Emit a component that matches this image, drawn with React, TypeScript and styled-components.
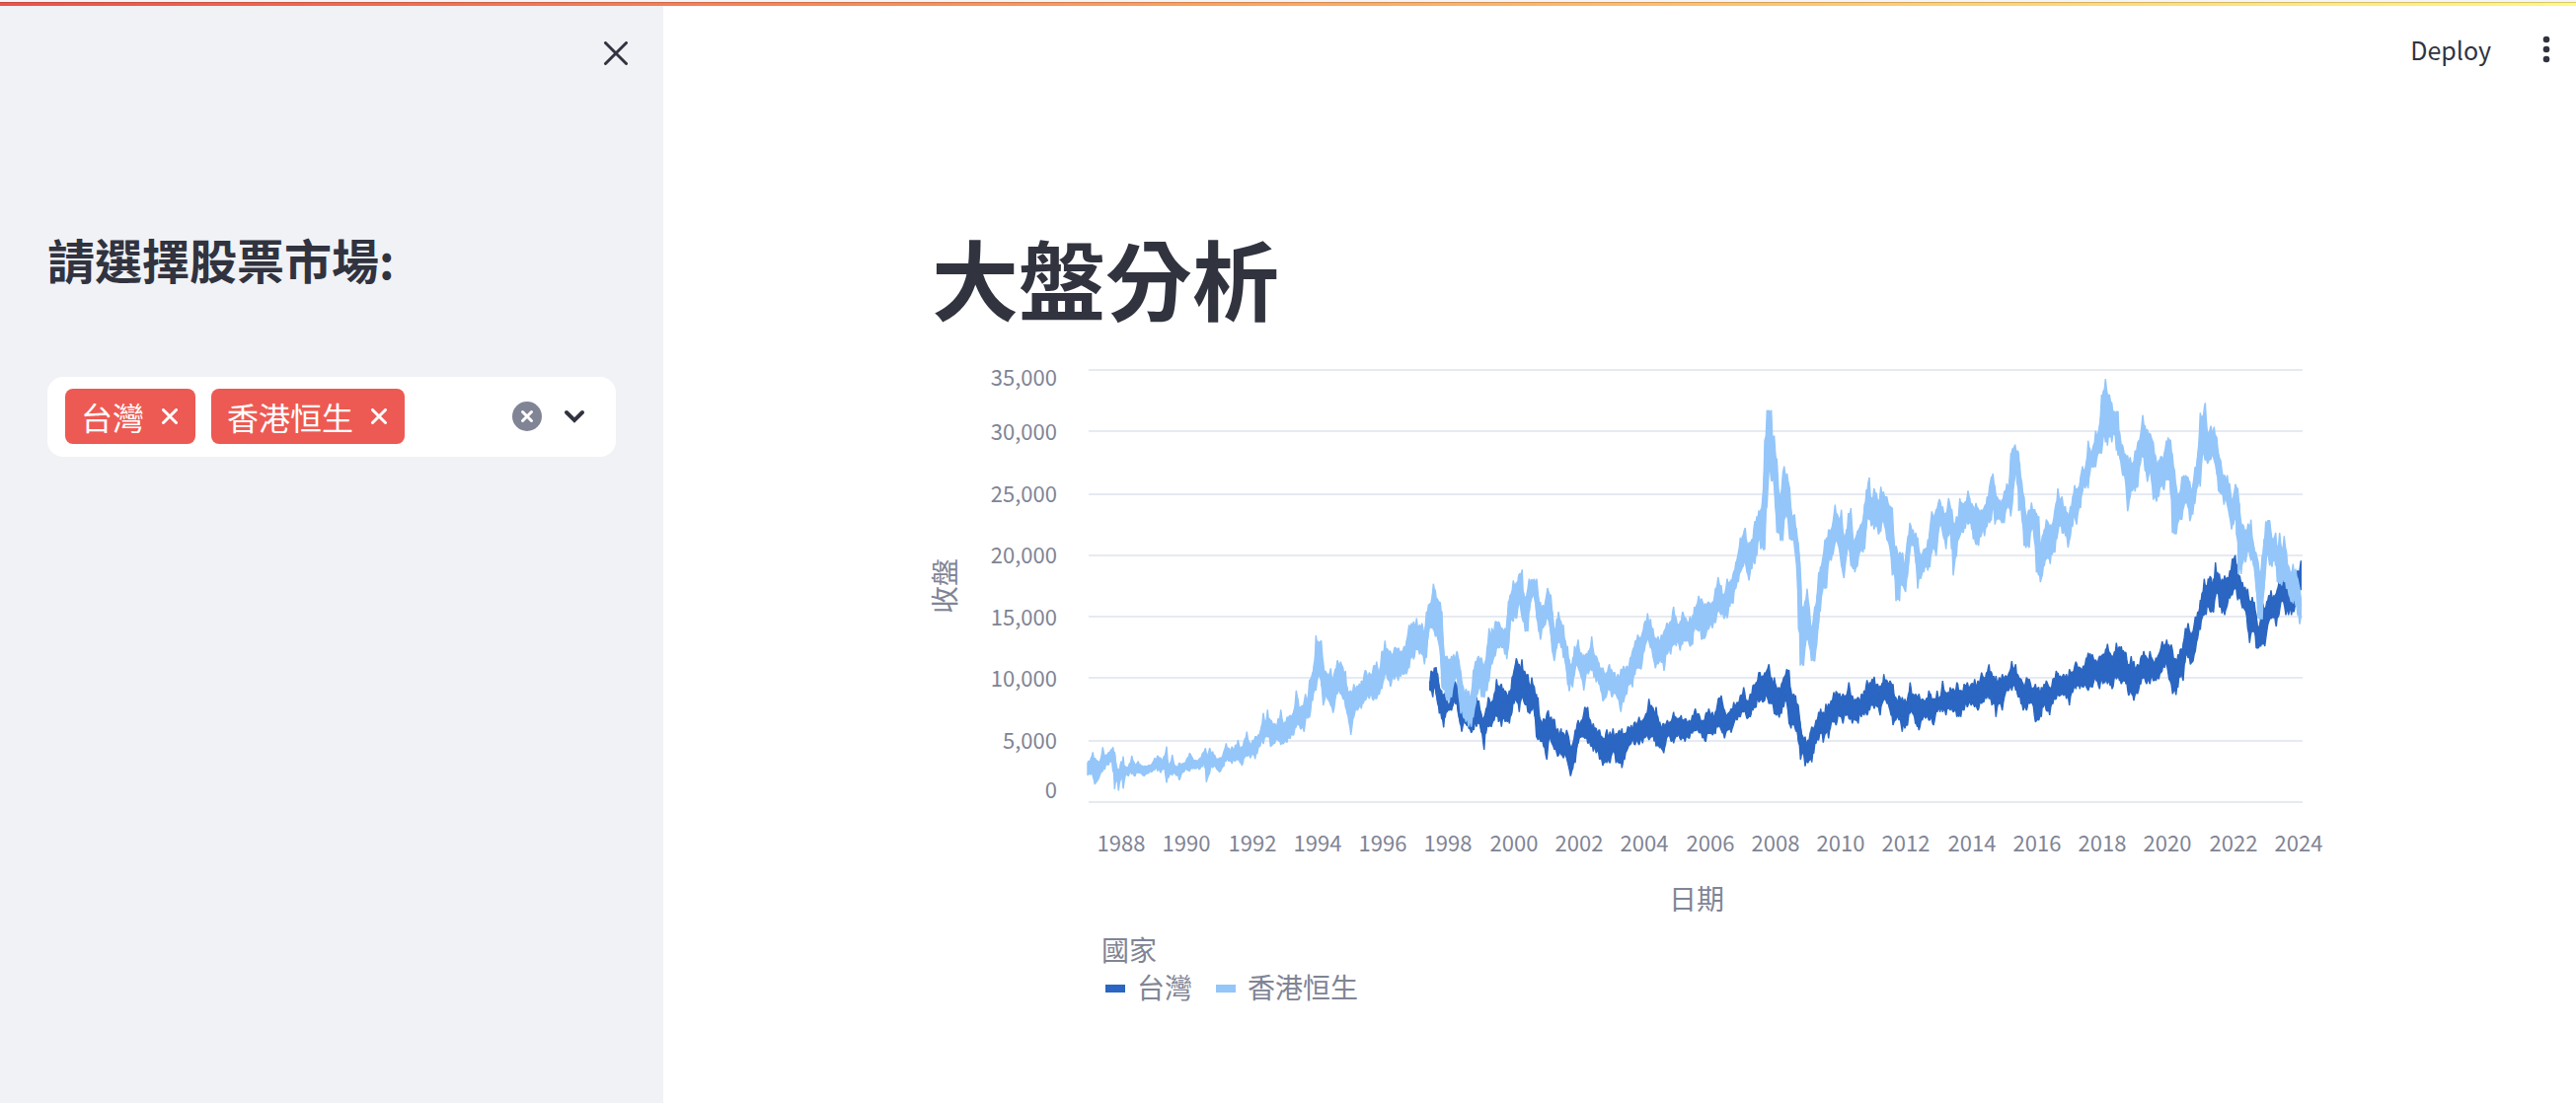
import React, { useState } from "react";
import styled, { createGlobalStyle } from "styled-components";

const ink = "#31333f";
const muted = "#808495";
const coral = "#ed5a53";
const darkBlue = "#2a66c2";
const lightBlue = "#94c6fa";
const fonts = `"Noto Sans CJK TC", "Noto Sans", sans-serif`;

const GlobalStyle = createGlobalStyle`
  *, *::before, *::after { box-sizing: border-box; }
  body { margin: 0; background: #ffffff; color: ${ink}; font-family: ${fonts}; }
  button, input { font: inherit; color: inherit; }
`;

const Decoration = styled.div`
  height: 6px;
  border-top: 2px solid #f4f5f8;
  background: linear-gradient(90deg, #ea534c, #f9a765 50%, #fdf986);
  background-clip: padding-box;
  box-shadow: inset 0 3px 0 -2px rgba(90, 30, 0, 0.22);
`;

const Shell = styled.div`
  display: flex;
  min-height: calc(100vh - 6px);
`;

const Sidebar = styled.aside`
  flex: 0 0 672px;
  min-width: 0;
  background: #f0f2f6;
`;

const SidebarTop = styled.div`
  display: flex;
  justify-content: flex-end;
  padding: 24px 24px 0;
`;

const IconButton = styled.button<{ $size: number }>`
  display: inline-flex;
  flex: none;
  align-items: center;
  justify-content: center;
  width: ${(p) => p.$size}px;
  height: ${(p) => p.$size}px;
  padding: 0;
  border: 0;
  background: transparent;
  cursor: pointer;
`;

const SidebarBody = styled.div`
  padding: 155px 48px 0;
`;

const SidebarHeading = styled.h2`
  margin: 0 0 91px;
  font-size: 48px;
  line-height: 58px;
  font-weight: 700;
`;

const MultiSelect = styled.div`
  display: flex;
  align-items: center;
  gap: 16px;
  padding: 12px 26px 13px 18px;
  border-radius: 16px;
  background: #ffffff;
`;

const Tag = styled.span`
  display: inline-flex;
  flex: none;
  align-items: center;
  gap: 12px;
  height: 56px;
  padding: 0 12px 0 16px;
  border-radius: 8px;
  background: ${coral};
  color: #ffffff;
  font-size: 32px;
  line-height: 56px;
`;

const SearchInput = styled.input`
  flex: 1;
  width: 0;
  min-width: 0;
  border: 0;
  outline: 0;
  background: transparent;
  font-size: 32px;
  height: 40px;
`;

const SelectActions = styled.div`
  display: flex;
  align-items: center;
  gap: 16px;
`;

const Main = styled.main`
  flex: 1;
  min-width: 0;
  padding-left: 14px;
`;

const Toolbar = styled.header`
  display: flex;
  align-items: center;
  justify-content: flex-end;
  gap: 38px;
  height: 88px;
  padding-right: 12px;
`;

const DeployButton = styled.button`
  padding: 0;
  border: 0;
  background: transparent;
  font-size: 25px;
  line-height: 40px;
  cursor: pointer;
`;

const Content = styled.div`
  max-width: 1408px;
  margin: 0 auto;
  padding-top: 133px;
`;

const Title = styled.h1`
  margin: 0;
  font-size: 88px;
  line-height: 106px;
  font-weight: 700;
`;

const Figure = styled.figure`
  margin: 21px 0 0;
`;

const Plot = styled.svg`
  display: block;
  overflow: visible;
  width: 100%;
  height: auto;
  font-family: ${fonts};
  fill: ${muted};
`;

const Legend = styled.figcaption`
  padding: 7px 0 0 172px;
  color: ${muted};
  font-size: 28px;
  line-height: 38px;
`;

const LegendItems = styled.ul`
  display: flex;
  gap: 24px;
  margin: 0;
  padding: 0 0 0 4px;
  list-style: none;
`;

const LegendItem = styled.li<{ $color: string }>`
  display: flex;
  align-items: center;
  gap: 12px;

  &::before {
    content: "";
    width: 20px;
    height: 8px;
    margin-top: 4px;
    background: ${(p) => p.$color};
  }
`;

/* Each chunk lists "x:high,low" bands in thirds of a pixel from its origin in the plot. */
type Chunk = { x: number; y: number; bands: string };

const hangSeng: Chunk[] = [
  {
    x: -3,
    y: 226,
    bands: `6:520,558 22:487,560 28:505,585 38:515,570 42:520,560 52:472,545 58:500,540 70:487,525 83:472,515 88:485,600 94:530,575 100:540,604 108:515,565 114:500,598 120:530,560 130:530,560 140:498,555 150:525,560 160:515,550 178:530,560 200:525,548 210:505,540 218:498,545 228:505,550 238:500,535 246:470,580 252:530,565 263:495,558 270:530,552 284:520,572 300:520,545 316:490,545 330:512,538 345:508,540 364:475,530 367:490,578 377:475,550 386:485,535 400:508,540 407:505,548 420:485,530 427:460,515 435:475,515 445:470,522 455:465,515 463:450,512 475:470,528 490:425,500 500:462,505 508:450,495 515:440,508 530:430,470 540:368,462 547:395,440 553:358,440 562:390,470 575:400,460 585:385,450 593:358,465 600:400,462 612:380,458 622:375,445 632:365,435 640:300,412 646:330,405 654:350,418 664:335,425 668:310,390 675:330,385 680:270,382 690:245,330 695:220,300 700:132,300 706:150,258 716:148,270 722:225,345 735:250,325 745:232,345 752:262,368 765:208,310 775:212,310 782:230,325 790:240,350 795:290,370 806:300,435 815:280,380 825:285,360 838:270,355 850:238,330 862:245,325 875:225,330 884:212,325 893:240,310 900:180,295 910:148,250 918:175,265 926:180,288 940:168,262 950:170,270 958:180,258 968:165,250 975:150,250 983:100,232 990:95,200 997:90,205 1006:80,175 1015:100,190 1022:95,190 1030:130,220 1036:60,200 1042:40,125`,
  },
  {
    x: 297,
    y: 166,
    bands: `147:215,290 152:200,290 157:155,295 163:175,315 168:200,312 178:212,360 183:240,470 188:370,478 198:375,510 205:385,515 212:375,500 218:370,460 229:360,440 235:390,500 240:420,550 248:470,560 256:475,575 264:480,590 272:490,590 278:420,560 285:390,520 294:375,475 303:380,500 312:400,500 320:350,480 326:290,450 335:290,400 345:270,375 355:270,350 365:290,350 374:290,370 380:290,385 385:210,350 390:190,270 400:145,270 410:150,260 418:125,210 427:112,260 430:190,270 436:195,300 444:170,300 448:140,230 455:142,200 463:140,190 471:140,260 477:205,300 482:210,325 490:220,290 497:210,280 504:168,260 514:190,300 518:240,360 524:290,390 532:260,350 537:240,335 545:270,350 552:280,380 558:330,390 565:345,460 570:385,482 580:400,470 586:345,420 597:325,410 605:365,435 614:370,480 620:370,435 628:360,430 638:315,420 645:370,440 652:375,455 660:395,460 672:410,512 682:425,500 692:400,480 700:420,500 708:425,490 718:430,505 727:415,545 735:405,515 745:405,490 755:380,460 762:360,470 770:330,430 778:310,410 788:320,415 798:275,360 808:245,320 817:262,350 824:290,375 832:320,412 840:315,400 850:310,395 858:300,420 866:275,370 878:270,370 887:225,340 895:260,345 907:270,358 914:240,340 925:262,330 937:255,345 945:250,340 950:225,290 963:192,300 972:200,325 982:215,320 992:210,295 1005:210,290 1014:170,275 1022:135,240 1032:160,250 1040:190,262 1050:140,260 1058:150,225 1068:125,215 1076:90,170 1084:60,150`,
  },
  {
    x: 597,
    y: 6,
    bands: `190:495,600 205:465,570 210:510,600 216:510,625 225:500,590 234:445,575 240:430,550 246:412,500 252:410,530 260:360,532 264:200,530 268:185,410 271:107,400 277:107,290 284:107,322 287:185,322 293:185,320 296:235,400 301:255,480 306:350,482 312:370,505 319:300,505 323:278,440 332:300,430 340:345,500 345:420,502 355:425,510 360:485,560 366:510,640 370:560,750 372:660,884 382:715,884 386:690,835 393:650,800 400:710,825 406:770,870 416:705,870 422:690,820 428:600,750 433:585,720 440:560,655 447:500,650 452:495,648 458:470,565 466:470,565 472:445,545 478:395,510 487:430,515 497:410,580 505:490,618 512:480,550 518:420,520 526:405,580 533:510,590 538:500,600 546:475,580 556:455,535 563:440,540 568:395,530 573:350,445 582:312,440 588:380,460 596:345,470 603:360,455 610:385,485 617:340,475 625:355,440 635:370,500 645:400,530 652:405,610 658:520,600 663:520,688 674:540,688 676:540,640 683:540,640 692:570,660 698:500,600 705:450,530 715:470,520 723:480,550 729:495,650 738:545,620 748:530,600 760:500,595 766:470,585 772:415,540 780:430,530 785:410,550 795:378,460 805:400,480 815:420,530 823:375,490 833:410,500 837:450,610 847:430,550 853:430,500 857:375,490 868:390,480 882:352,455 893:390,470 898:400,500 906:390,515 914:410,520 922:410,490 932:400,490 940:370,460 947:340,450 953:310,440 958:300,400`,
  },
  {
    x: 897,
    y: -14,
    bands: `64:400,515 70:430,500 78:440,500 85:440,510 92:415,510 100:390,465 106:400,465 112:300,490 117:285,450 125:272,370 134:292,370 136:300,473 146:390,473 152:430,580 158:485,586 168:470,586 175:448,530 185:470,560 190:480,660 197:490,670 202:590,690 208:550,670 214:530,640 220:500,620 226:510,620 232:515,635 240:510,600 246:470,600 255:405,540 262:440,520 268:430,540 278:460,550 286:485,585 293:460,550 300:430,520 306:395,490 312:405,515 318:400,470 324:370,465 330:338,410 338:350,405 347:260,405 355:295,340 363:275,340 370:230,340 380:228,298 388:120,298 393:110,250 400:72,265 406:120,275 412:120,250 419:145,265 426:170,240 433:170,290 438:170,305 443:255,310 452:275,365 460:300,370 467:305,475 475:310,430 483:330,410 490:290,415 498:265,400 506:245,330 513:182,310 520:215,350 527:225,385 536:240,350 545:265,440 555:325,445 562:320,430 568:308,400 578:300,410 585:260,380 590:250,380 598:260,385 603:300,540 610:350,544 615:400,544 622:420,505 632:370,500 638:365,460 644:365,450 650:370,460 656:385,505 665:400,485 672:340,450 680:305,400 688:175,400 695:185,295 703:145,320 710:245,330 720:215,318 730:218,318 738:250,360 743:300,412 750:320,420 760:365,455 770:365,455 777:390,490 783:440,530 795:392,500 802:405,500 803:420,666 812:510,666 818:515,630 826:530,630 833:512,590 842:500,625 850:580,640 857:600,680 864:630,800 870:660,804 876:610,804 882:570,710 887:505,620 893:503,600 899:503,640 906:560,644 917:540,620 922:590,690 929:540,695 935:590,700 943:550,690 950:600,710 958:645,730 964:660,750 970:635,755 978:650,760 984:680,790 990:710,818 994:740,795`,
  },
];

const taiwan: Chunk[] = [
  {
    x: 297,
    y: 166,
    bands: `146:460,478 150:420,480 155:425,500 160:410,470 165:408,490 170:430,520 175:470,550 182:480,565 188:490,592 193:485,560 198:510,545 205:530,540 212:500,540 218:448,515 224:455,520 232:460,540 238:520,580 243:540,605 250:540,575 258:565,585 265:570,595 272:560,608 280:540,600 288:500,590 295:510,580 302:550,605 311:560,660 317:535,600 324:500,590 333:515,590 342:490,570 349:445,560 355:465,575 364:460,590 375:480,575 388:480,580 396:440,545 402:420,520 409:382,510 418:400,545 426:385,500 434:420,520 444:430,545 450:465,550 456:440,540 464:470,540 470:490,620 475:500,630 483:570,635 492:565,650 502:550,690 506:540,640 515:560,635 525:568,660 535:595,680 545:595,675 553:610,685 562:600,685 568:620,710 574:650,740 581:640,715 588:600,700 597:570,640 607:570,620 617:530,625 626:530,640 634:570,645 643:580,665 652:595,670 662:600,690 672:625,708 684:598,700 694:605,700 703:595,665 712:610,700 722:600,700 730:595,715 738:610,690 748:590,655 758:585,640 770:575,645 782:560,645 793:570,640 803:550,620 812:505,630 822:530,620 834:530,650 845:575,655 857:580,670 868:570,620 880:575,635 887:545,640 898:565,620 910:555,630 922:565,635 935:570,625 944:555,610 953:535,600 963:550,605 975:570,625 985:550,635 994:535,610 1005:545,615 1014:545,612 1023:505,590 1032:495,600 1042:540,625 1052:550,600 1062:535,608 1070:515,580 1080:515,570 1090:495,560 1100:470,545 1110:510,565 1120:490,560 1128:465,540 1138:455,530 1146:425,515`,
  },
  {
    x: 597,
    y: 6,
    bands: `250:905,990 258:915,995 264:905,990 270:900,975 277:880,1000 285:920,1000 293:920,1030 300:950,1035 308:950,1042 315:940,1030 322:920,1010 331:895,995 338:898,1060 344:960,1075 352:970,1060 358:975,1080 366:1005,1110 373:1070,1170 380:1100,1150 387:1100,1190 395:1110,1180 402:1090,1170 407:1070,1178 413:1075,1150 420:1050,1120 428:1025,1110 434:1015,1090 442:1025,1118 450:1000,1090 458:1000,1105 466:990,1060 474:965,1055 481:962,1065 492:968,1040 502:970,1060 510:975,1035 520:935,1045 530:975,1060 540:985,1050 548:980,1060 558:970,1040 566:960,1035 575:928,1035 583:935,1020 590:925,1005 597:918,1015 607:940,1010 615:945,1035 626:910,985 636:930,1000 645:930,1020 654:940,1065 662:980,1050 672:975,1050 682:980,1085 690:985,1075 698:985,1065 706:935,1030 714:970,1030 722:970,1060 733:970,1080 743:985,1050 753:990,1045 763:960,1050 777:985,1065 788:960,1025 797:980,1025 805:930,1025 815:965,1035 828:950,1020 838:955,1025 848:935,1040 860:960,1040 870:940,1020 880:935,1010 892:940,1005 902:925,1010 912:930,1020 923:905,1000 930:920,995 938:905,985 946:880,985 955:910,1005`,
  },
  {
    x: 897,
    y: -14,
    bands: `60:975,1060 67:975,1100 77:980,1060 86:970,1080 95:975,1030 105:970,1020 115:930,1020 127:940,1020 135:975,1040 143:985,1060 150:1000,1080 160:980,1080 168:985,1060 178:1015,1060 187:1000,1115 197:1010,1110 205:1010,1100 213:1000,1060 220:990,1080 230:1010,1095 240:985,1060 250:960,1045 262:975,1035 272:970,1035 281:970,1045 290:955,1065 300:965,1025 310:932,1015 322:950,1015 332:945,1010 347:905,1020 360:910,1010 372:930,990 382:915,1015 392:910,1000 406:878,1000 420:915,1015 433:875,985 448:885,1000 462:905,1000 470:940,1035 478:915,1025 486:930,1050 497:940,1030 507:920,1000 516:900,980 525:920,1000 535:900,1000 545:930,990 553:920,990 562:910,985 572:870,960 580:880,950 586:865,940 593:880,985 600:880,1000 604:900,1030 614:925,1033 620:910,1010 627:895,980 636:880,990 643:830,915 651:815,920 658:845,940 666:840,930 673:795,900 680:780,860 688:745,835 693:725,800 700:680,790 706:700,790 712:680,765 718:672,780 728:690,782 734:630,730 740:660,725 746:665,765 754:680,785 762:670,790 770:675,760 778:655,740 785:620,730 794:608,710 802:650,745 808:670,740 816:690,770 824:705,775 832:710,830 838:750,875 846:735,840 852:750,840 858:790,890 865:830,890 872:800,885 878:755,880 884:770,885 890:750,840 896:730,810 903:715,800 911:730,800 919:725,825 927:690,790 933:690,750 941:675,750 948:685,790 956:715,790 965:700,790 973:740,780 980:660,740 985:655,710 990:655,712 994:625,714`,
  },
];

type Band = [number, number, number];

const readBands = (chunks: Chunk[]): Band[] =>
  chunks.flatMap((c) =>
    c.bands.split(" ").map((entry): Band => {
      const [x, range] = entry.split(":");
      const [high, low] = range.split(",").map(Number);
      return [c.x + Number(x) / 3, c.y + high / 3, c.y + low / 3];
    })
  );

/* Fills in the day-to-day jitter between the bands, with a repeatable generator. */
function buildSeries(chunks: Chunk[], seed: number) {
  let state = seed;
  const rand = () => {
    state = (state * 16807) % 2147483647;
    return state / 2147483647;
  };
  const bands = readBands(chunks);
  const upper: string[] = [];
  const lower: string[] = [];
  const put = (x: number, high: number, low: number) => {
    upper.push(`${x.toFixed(1)} ${high.toFixed(1)}`);
    lower.push(`${x.toFixed(1)} ${low.toFixed(1)}`);
  };
  bands.forEach((band, i) => {
    put(...band);
    const next = bands[i + 1];
    if (!next) return;
    const steps = Math.max(1, Math.round(next[0] - band[0]));
    for (let s = 1; s < steps; s++) {
      const t = s / steps;
      const x = band[0] + (next[0] - band[0]) * t;
      const high = band[1] + (next[1] - band[1]) * t;
      const low = band[2] + (next[2] - band[2]) * t;
      const room = Math.min(7, (low - high) * 0.25);
      put(x, high + rand() * room, low - rand() * room);
    }
  });
  return {
    band: `M${upper.join("L")}L${lower.reverse().join("L")}Z`,
    middle: `M${bands
      .slice(1, -1)
      .map(([x, high, low]) => `${x.toFixed(1)} ${((high + low) / 2).toFixed(1)}`)
      .join("L")}`,
  };
}

const taiwanSeries = buildSeries(taiwan, 71);
const hangSengSeries = buildSeries(hangSeng, 29);

function Series({ data, color }: { data: { band: string; middle: string }; color: string }) {
  return (
    <g stroke={color}>
      <path d={data.band} fill={color} strokeWidth="1.4" strokeLinejoin="bevel" />
      <path d={data.middle} fill="none" strokeWidth="5" strokeLinejoin="bevel" />
    </g>
  );
}

const gridLines = [1, 63, 127, 189, 251, 313, 377, 439];
const yTicks = [
  { label: "35,000", y: 37 },
  { label: "30,000", y: 92 },
  { label: "25,000", y: 155 },
  { label: "20,000", y: 217 },
  { label: "15,000", y: 280 },
  { label: "10,000", y: 342 },
  { label: "5,000", y: 405 },
  { label: "0", y: 455 },
];
const years = Array.from({ length: 19 }, (_, i) => 1988 + i * 2);

function PriceChart() {
  return (
    <Figure>
      <Plot viewBox="0 0 1408 582" role="img" aria-label="收盤">
        <g transform="translate(159 20)">
          {gridLines.map((y) => (
            <path key={y} d={`M0 ${y}H1230`} stroke="#e6eaf1" strokeWidth="2" />
          ))}
          <Series data={taiwanSeries} color={darkBlue} />
          <Series data={hangSengSeries} color={lightBlue} />
        </g>
        <g fontSize="22" textAnchor="end">
          {yTicks.map((t) => (
            <text key={t.label} x="127" y={t.y}>
              {t.label}
            </text>
          ))}
        </g>
        <g fontSize="22" textAnchor="middle">
          {years.map((year, i) => (
            <text key={year} x={Math.round(192 + (i * 1193) / 18)} y="509">
              {year}
            </text>
          ))}
        </g>
        <g fontSize="28" textAnchor="middle">
          <text x="775" y="568">
            日期
          </text>
          <text transform="translate(24 240) rotate(-90)">收盤</text>
        </g>
      </Plot>
      <Legend>
        國家
        <LegendItems>
          <LegendItem $color={darkBlue}>台灣</LegendItem>
          <LegendItem $color={lightBlue}>香港恒生</LegendItem>
        </LegendItems>
      </Legend>
    </Figure>
  );
}

function Cross({ size, stroke, color }: { size: number; stroke: number; color: string }) {
  const a = stroke / 2;
  const b = size - a;
  return (
    <svg width={size} height={size} aria-hidden="true">
      <path
        d={`M${a} ${a}L${b} ${b}M${b} ${a}L${a} ${b}`}
        fill="none"
        stroke={color}
        strokeWidth={stroke}
        strokeLinecap="round"
      />
    </svg>
  );
}

export default function App() {
  const [markets, setMarkets] = useState(["台灣", "香港恒生"]);
  const remove = (name: string) => setMarkets(markets.filter((m) => m !== name));

  return (
    <>
      <GlobalStyle />
      <Decoration />
      <Shell>
        <Sidebar>
          <SidebarTop>
            <IconButton type="button" $size={48} aria-label="Close sidebar">
              <Cross size={24} stroke={3} color={ink} />
            </IconButton>
          </SidebarTop>
          <SidebarBody>
            <SidebarHeading>
              <label htmlFor="markets">請選擇股票市場:</label>
            </SidebarHeading>
            <MultiSelect>
              {markets.map((name) => (
                <Tag key={name}>
                  {name}
                  <IconButton
                    type="button"
                    $size={28}
                    aria-label={`Remove ${name}`}
                    onClick={() => remove(name)}
                  >
                    <Cross size={16} stroke={3} color="#ffffff" />
                  </IconButton>
                </Tag>
              ))}
              <SearchInput id="markets" type="text" autoComplete="off" />
              <SelectActions>
                <IconButton
                  type="button"
                  $size={32}
                  aria-label="Clear all"
                  onClick={() => setMarkets([])}
                >
                  <svg width="30" height="30" aria-hidden="true">
                    <circle cx="15" cy="15" r="15" fill={muted} />
                    <path
                      d="M10.5 10.5L19.5 19.5M19.5 10.5L10.5 19.5"
                      stroke="#ffffff"
                      strokeWidth="3"
                      strokeLinecap="round"
                    />
                  </svg>
                </IconButton>
                <IconButton type="button" $size={32} aria-label="Open list">
                  <svg width="22" height="14" aria-hidden="true">
                    <path
                      d="M3 3L11 11L19 3"
                      fill="none"
                      stroke={ink}
                      strokeWidth="4"
                      strokeLinecap="round"
                    />
                  </svg>
                </IconButton>
              </SelectActions>
            </MultiSelect>
          </SidebarBody>
        </Sidebar>
        <Main>
          <Toolbar>
            <DeployButton type="button">Deploy</DeployButton>
            <IconButton type="button" $size={36} aria-label="Menu">
              <svg width="8" height="28" fill={ink} aria-hidden="true">
                <circle cx="4" cy="4" r="3.3" />
                <circle cx="4" cy="14" r="3.3" />
                <circle cx="4" cy="24" r="3.3" />
              </svg>
            </IconButton>
          </Toolbar>
          <Content>
            <Title>大盤分析</Title>
            <PriceChart />
          </Content>
        </Main>
      </Shell>
    </>
  );
}
